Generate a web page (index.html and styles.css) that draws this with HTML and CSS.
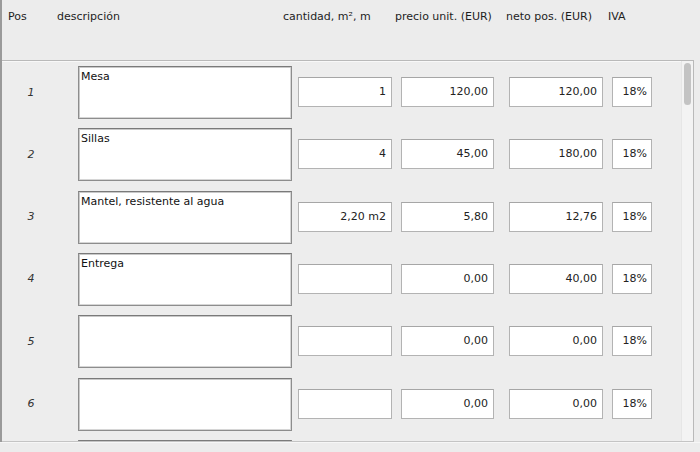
FILE: index.html
```html
<!DOCTYPE html>
<html lang="es">
<head>
<meta charset="utf-8">
<title>Posiciones</title>
<link rel="stylesheet" href="styles.css">
</head>
<body>
<div class="window">
  <div class="main">
    <div class="header">
      <span class="h h-pos">Pos</span>
      <span class="h h-desc">descripción</span>
      <span class="h h-qty">cantidad, m², m</span>
      <span class="h h-price">precio unit. (EUR)</span>
      <span class="h h-net">neto pos. (EUR)</span>
      <span class="h h-vat">IVA</span>
    </div>
    <div class="panel">
      <div class="rows">
        <div class="row">
          <span class="pos">1</span>
          <div class="desc">Mesa</div>
          <div class="field f-qty">1</div>
          <div class="field f-price">120,00</div>
          <div class="field f-net">120,00</div>
          <div class="field f-vat">18%</div>
        </div>
        <div class="row">
          <span class="pos">2</span>
          <div class="desc">Sillas</div>
          <div class="field f-qty">4</div>
          <div class="field f-price">45,00</div>
          <div class="field f-net">180,00</div>
          <div class="field f-vat">18%</div>
        </div>
        <div class="row">
          <span class="pos">3</span>
          <div class="desc">Mantel, resistente al agua</div>
          <div class="field f-qty">2,20 m2</div>
          <div class="field f-price">5,80</div>
          <div class="field f-net">12,76</div>
          <div class="field f-vat">18%</div>
        </div>
        <div class="row">
          <span class="pos">4</span>
          <div class="desc">Entrega</div>
          <div class="field f-qty"></div>
          <div class="field f-price">0,00</div>
          <div class="field f-net">40,00</div>
          <div class="field f-vat">18%</div>
        </div>
        <div class="row">
          <span class="pos">5</span>
          <div class="desc"></div>
          <div class="field f-qty"></div>
          <div class="field f-price">0,00</div>
          <div class="field f-net">0,00</div>
          <div class="field f-vat">18%</div>
        </div>
        <div class="row">
          <span class="pos">6</span>
          <div class="desc"></div>
          <div class="field f-qty"></div>
          <div class="field f-price">0,00</div>
          <div class="field f-net">0,00</div>
          <div class="field f-vat">18%</div>
        </div>
        <div class="row">
          <span class="pos"></span>
          <div class="desc"></div>
        </div>
      </div>
      <div class="scrolltrack"><div class="thumb"></div></div>
    </div>
  </div>
  <div class="footer"></div>
</div>
</body>
</html>
```

FILE: styles.css
```css
* { box-sizing: border-box; }
html, body { margin: 0; padding: 0; }
body {
  background: #ececec;
  font-family: "DejaVu Sans", "Verdana", sans-serif;
  font-size: 11px;
  color: #1e1e1e;
}
.window {
  width: 700px;
  height: 452px;
  overflow: hidden;
  display: flex;
  flex-direction: column;
}
.main {
  height: 442px;
  border-left: 2px solid #9a9a9a;
  display: flex;
  flex-direction: column;
}
.header {
  height: 60px;
  display: flex;
  padding-top: 10px;
  padding-left: 6px;
  line-height: 13px;
  white-space: nowrap;
}
.h-pos { width: 49px; }
.h-desc { width: 226px; }
.h-qty { width: 112px; }
.h-price { width: 111px; }
.h-net { width: 102px; }
.h-vat { width: 40px; }

.panel {
  height: 382px;
  width: 692px;
  border-top: 1px solid #b9b9b9;
  border-right: 1px solid #b9b9b9;
  border-bottom: 1px solid #c4c4c4;
  box-shadow: inset 0 1px 0 #f8f8f8;
  display: flex;
  background: #ededed;
}
.rows {
  flex: 1;
  overflow: hidden;
  padding-top: 5px;
}
.row {
  height: 52px;
  margin-bottom: 10.33px;
  display: flex;
  align-items: center;
}
.pos {
  width: 58px;
  text-align: center;
  font-style: italic;
  color: #333;
}
.desc {
  margin-left: 18px;
  width: 214px;
  height: 53px;
  align-self: flex-start;
  background: #fff;
  border: 1px solid #8d8d8d;
  border-top-color: #7a7a7a;
  box-shadow: inset 1px 1px 0 #c9c9c9, inset -1px -1px 0 #d6d6d6;
  padding: 3px 2px;
  line-height: 13px;
  color: #111;
}
.field {
  height: 30px;
  background: #fff;
  border: 1px solid #b3b3b3;
  border-top-color: #a6a6a6;
  text-align: right;
  line-height: 28px;
  padding-right: 5px;
  color: #222;
  white-space: nowrap;
}
.f-qty { margin-left: 6px; width: 94px; }
.f-price { margin-left: 9px; width: 93px; }
.f-net { margin-left: 15px; width: 94px; }
.f-vat { margin-left: 9px; width: 40px; padding-right: 4px; }

.scrolltrack {
  width: 12px;
  background: #f3f3f3;
  border-left: 1px solid #e6e6e6;
  padding: 2px 2px 0 2px;
}
.thumb {
  width: 7px;
  height: 42px;
  border-radius: 4px;
  background: #c3c3c3;
}
.footer {
  flex: 1;
  background: #ececec;
  border-top: 1px solid #f6f6f6;
}
```
